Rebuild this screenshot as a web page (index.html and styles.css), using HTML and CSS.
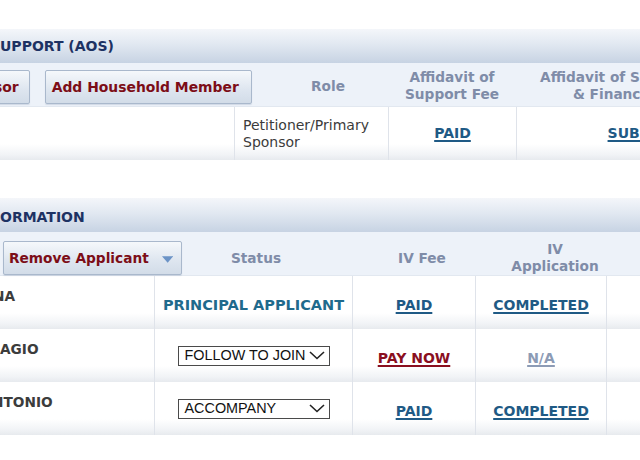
FILE: index.html
```html
<!DOCTYPE html>
<html lang="en">
<head>
  <meta charset="UTF-8">
  <meta name="viewport" content="width=device-width, initial-scale=1.0">
  <title>Case Summary</title>
  <link rel="stylesheet" href="styles.css">
</head>
<body>
  <section class="panel">
    <h2 class="bar">UPPORT (AOS)</h2>
    <div class="head head-aos">
      <div class="tools">
        <button class="btn btn-cut">sor</button>
        <button class="btn">Add Household Member</button>
      </div>
      <div class="col-title">Role</div>
      <div class="col-title">Affidavit of<br>Support Fee</div>
      <div class="col-title">Affidavit of Support<br>&amp; Financial</div>
    </div>
    <div class="row row-aos">
      <div class="cell"></div>
      <div class="cell role">Petitioner/Primary<br>Sponsor</div>
      <div class="cell mid"><a class="link" href="#">PAID</a></div>
      <div class="cell mid"><a class="link" href="#">SUBMITTED</a></div>
    </div>
  </section>

  <section class="panel panel-iv">
    <h2 class="bar">ORMATION</h2>
    <div class="head head-iv">
      <div class="tools">
        <button class="btn btn-menu">Remove Applicant
          <svg width="12" height="7" viewBox="0 0 12 7"><path d="M0 0h12L6 7z" fill="#6b93c6"/></svg>
        </button>
      </div>
      <div class="col-title">Status</div>
      <div class="col-title">IV Fee</div>
      <div class="col-title">IV<br>Application</div>
    </div>

    <div class="row row-iv">
      <div class="cell name"><span class="cut-a">NA</span></div>
      <div class="cell mid low"><span class="principal">PRINCIPAL APPLICANT</span></div>
      <div class="cell mid low"><a class="link" href="#">PAID</a></div>
      <div class="cell mid low"><a class="link" href="#">COMPLETED</a></div>
      <div class="cell"></div>
    </div>

    <div class="row row-iv">
      <div class="cell name">AGIO</div>
      <div class="cell mid">
        <div class="pick"><span>FOLLOW TO JOIN</span>
          <svg width="16" height="9" viewBox="0 0 16 9"><path d="M1 1l7 6.5L15 1" fill="none" stroke="#222" stroke-width="1.6"/></svg>
        </div>
      </div>
      <div class="cell mid low"><a class="link link-pay" href="#">PAY NOW</a></div>
      <div class="cell mid low"><a class="link link-na" href="#">N/A</a></div>
      <div class="cell"></div>
    </div>

    <div class="row row-iv">
      <div class="cell name"><span class="cut-b">NTONIO</span></div>
      <div class="cell mid">
        <div class="pick"><span>ACCOMPANY</span>
          <svg width="16" height="9" viewBox="0 0 16 9"><path d="M1 1l7 6.5L15 1" fill="none" stroke="#222" stroke-width="1.6"/></svg>
        </div>
      </div>
      <div class="cell mid low"><a class="link" href="#">PAID</a></div>
      <div class="cell mid low"><a class="link" href="#">COMPLETED</a></div>
      <div class="cell"></div>
    </div>
  </section>
</body>
</html>
```

FILE: styles.css
```css
html, body {
  overflow: hidden;
}

body {
  margin: 0;
  background: #fff;
  font-family: "DejaVu Sans", Verdana, sans-serif;
  font-size: 14px;
  color: #333;
}

.panel {
  margin-top: 29px;
  width: 820px;
}

.panel-iv {
  margin-top: 38px;
}

/* section title strip */
.bar {
  margin: 0;
  height: 34px;
  line-height: 34px;
  font-size: 14px;
  font-weight: bold;
  color: #1d3263;
  background: linear-gradient(#f4f6fa, #e1e8f1 45%, #c7d3e3);
}

.panel-iv .bar {
  line-height: 38px;
}

.head {
  display: grid;
  height: 44px;
  background: #edf2f9;
  border-bottom: 1px solid #e2e8f0;
  box-sizing: border-box;
}

.head-aos {
  grid-template-columns: 268px 120px 128px 200px;
  align-items: center;
  padding-top: 3px;
}

.head-iv {
  grid-template-columns: 190px 132px 200px 66px;
  align-items: center;
  padding-top: 9px;
}

.col-title {
  justify-self: center;
  text-align: center;
  white-space: nowrap;
  font-size: 13.7px;
  line-height: 17px;
  font-weight: bold;
  color: #7f8ca8;
}

.tools {
  display: flex;
  gap: 15px;
  align-self: start;
  padding-top: 4px;
}

.head-iv .tools {
  padding-top: 0;
}

.btn {
  height: 34px;
  padding: 0 12px 0 6px;
  border: 1px solid #a9b8cc;
  border-radius: 2px;
  background: linear-gradient(#f5f8fb, #dde5ef 60%, #d2dce8);
  box-shadow: 0 1px 1px rgba(120, 140, 170, 0.25);
  font-family: "DejaVu Sans", Verdana, sans-serif;
  font-size: 13.9px;
  font-weight: bold;
  color: #7c0d17;
  white-space: nowrap;
}

.btn-cut {
  margin-left: -13px;
  padding-right: 10px;
}

.btn-menu {
  display: flex;
  align-items: center;
  gap: 13px;
  margin-left: 3px;
  width: 179px;
  padding: 0 8px 0 5px;
  font-size: 13.7px;
}

.btn-menu svg {
  margin-top: 3px;
}

.row {
  display: grid;
  height: 53px;
  background: linear-gradient(#fff 70%, #f1f3f6 90%, #e7eaee);
}

.row-aos {
  grid-template-columns: 234px 154px 128px 274px;
}

.row-iv {
  grid-template-columns: 154px 198px 123px 131px 1fr;
}

.cell {
  border-left: 1px solid #dfe3ea;
  line-height: 17px;
}

.cell:first-child {
  border-left: none;
}

.mid {
  display: flex;
  align-items: center;
  justify-content: center;
}

.low {
  padding-top: 6px;
}

.role {
  display: flex;
  align-items: center;
  padding-left: 8px;
  color: #3b3b3b;
}

.name {
  padding-top: 12px;
  font-size: 13.7px;
  font-weight: bold;
  color: #3c3c3c;
  overflow: hidden;
}

.cut-a {
  margin-left: -7px;
}

.cut-b {
  margin-left: -8px;
}

.link {
  font-size: 14px;
  font-weight: bold;
  color: #1f5a85;
  text-decoration: underline;
  text-decoration-thickness: 2px;
  text-underline-offset: 2px;
}

.link-pay {
  color: #8a0f1f;
}

.link-na {
  color: #8c9bb5;
}

.principal {
  font-size: 14.5px;
  font-weight: bold;
  color: #1f6a8c;
  white-space: nowrap;
}

/* status dropdown */
.pick {
  display: flex;
  align-items: center;
  width: 152px;
  height: 20px;
  box-sizing: border-box;
  padding: 0 4px 0 6px;
  border: 1px solid #4a4a4a;
  background: #fff;
  font-family: "Liberation Sans", Arial, sans-serif;
  font-size: 14.4px;
  color: #111;
  white-space: nowrap;
}

.pick svg {
  flex: none;
  margin-left: auto;
}
```
